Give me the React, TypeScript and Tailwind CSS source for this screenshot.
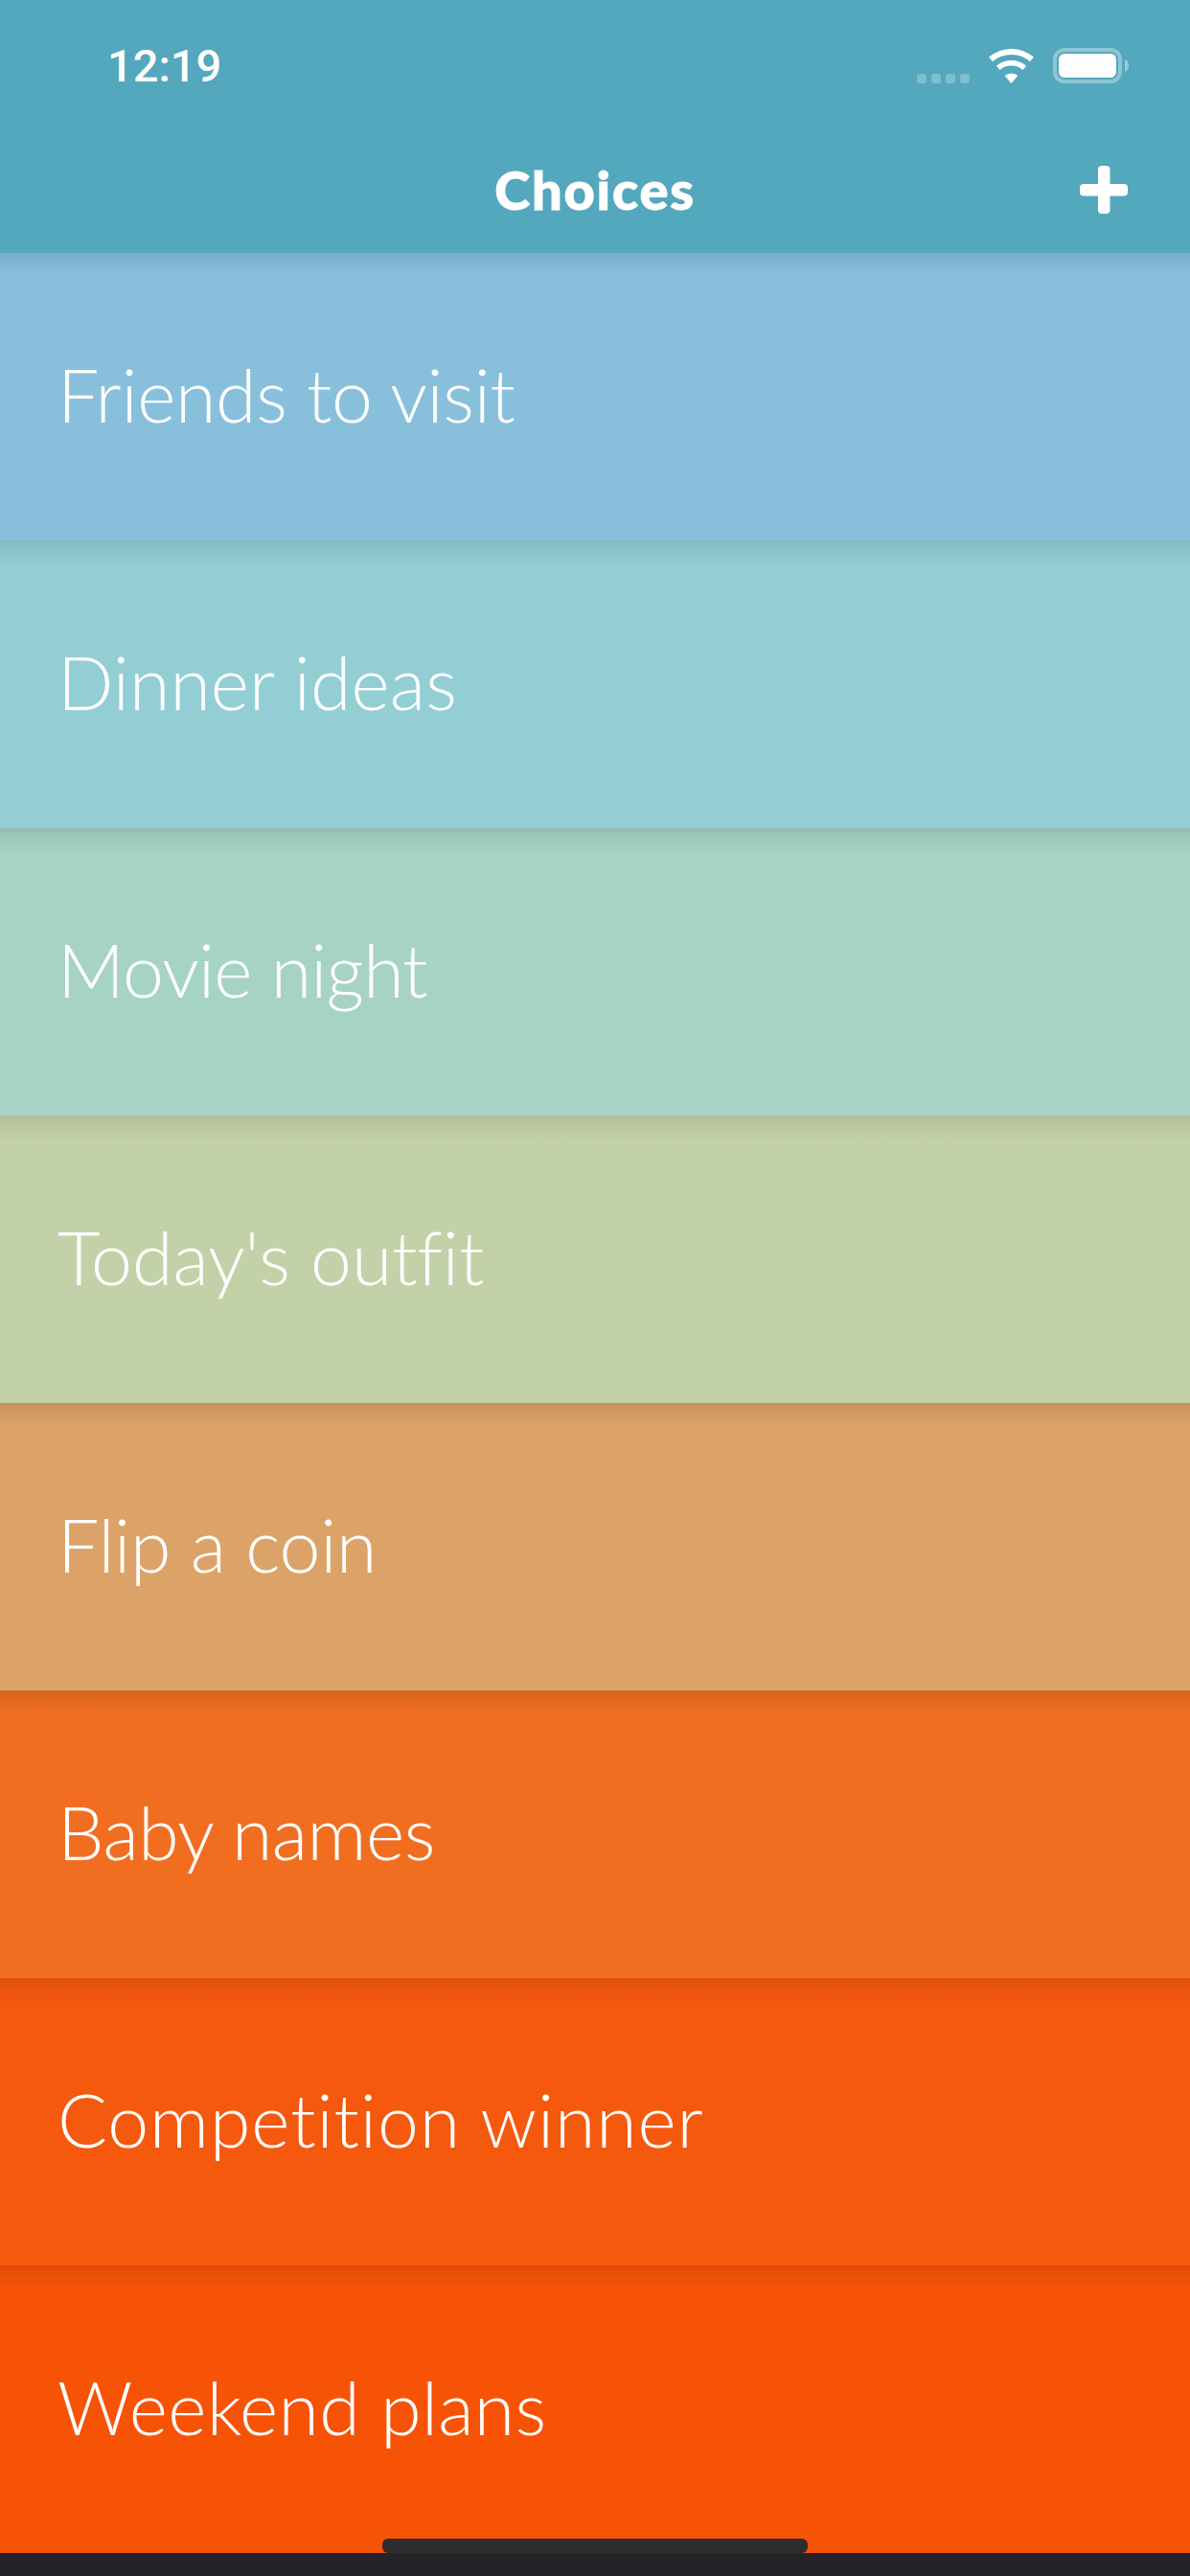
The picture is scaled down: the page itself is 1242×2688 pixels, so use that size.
export default function App() {
  const rows = [
    { label: "Friends to visit", bg: "bg-[#88c0dc]", track: "tracking-[-0.35px]" },
    { label: "Dinner ideas", bg: "bg-[#93ced5]", track: "tracking-[0.1px]" },
    { label: "Movie night", bg: "bg-[#a6d3c5]", track: "tracking-[-0.8px]" },
    { label: "Today's outfit", bg: "bg-[#c3d1a8]", track: "tracking-normal" },
    { label: "Flip a coin", bg: "bg-[#dca368]", track: "tracking-[-0.3px]" },
    { label: "Baby names", bg: "bg-[#f16e21]", track: "tracking-[-0.5px]" },
    { label: "Competition winner", bg: "bg-[#f4590e]", track: "tracking-[0.9px]" },
    { label: "Weekend plans", bg: "bg-[#f75307]", track: "tracking-[0.3px]" },
  ];
  return (
    <div className="w-[1242px] h-[2688px] flex flex-col overflow-hidden bg-[#26222a] font-['Lato',sans-serif] text-white">
      <header className="h-[264px] shrink-0 bg-[#54a8bd] flex flex-col">
        <div className="h-[136px] flex items-center justify-between pl-[112px] pr-[71px]">
          <span className="font-['Roboto',sans-serif] font-medium text-[47px] leading-none">12:19</span>
          <div className="flex items-end">
            <div className="flex gap-[5px] mr-[20px]">
              <span className="w-[10px] h-[10px] rounded-[3px] bg-white/25" />
              <span className="w-[10px] h-[10px] rounded-[3px] bg-white/25" />
              <span className="w-[10px] h-[10px] rounded-[3px] bg-white/25" />
              <span className="w-[10px] h-[10px] rounded-[3px] bg-white/25" />
            </div>
            <svg width="47" height="36" viewBox="0 0 47 36" className="mr-[20px]" fill="#fff">
              <path d="M0.1 8.6A36 36 0 0 1 46.9 8.6L43 13.2A30 30 0 0 0 4 13.2Z" />
              <path d="M7.9 17.8A24 24 0 0 1 39.1 17.8L35.5 22A18.5 18.5 0 0 0 11.5 22Z" />
              <path d="M16.7 28A10.5 10.5 0 0 1 30.3 28L23.5 36Z" />
            </svg>
            <div className="w-[72px] h-[37px] rounded-[12px] border-[4px] border-white/35 p-[2px] flex">
              <div className="flex-1 rounded-[6px] bg-white" />
            </div>
            <svg width="7" height="13" viewBox="0 0 7 13" className="mb-[12px] ml-[3px] -mr-[10px]" fill="#fff" fillOpacity="0.4">
              <path d="M0 0C3 1 4 4 4 6.5C4 9 3 12 0 13Z" />
            </svg>
          </div>
        </div>
        <div className="h-[124px] grid grid-cols-[1fr_auto_1fr] items-center px-[65px]">
          <span />
          <h1 className="font-black text-[56px] leading-none tracking-[1.8px] [-webkit-text-stroke:1px_white]">Choices</h1>
          <svg width="50" height="50" viewBox="0 0 50 50" className="justify-self-end" fill="#fff">
            <rect x="19" y="0" width="12.5" height="50" rx="4" />
            <rect x="0" y="19" width="50" height="12.5" rx="4" />
          </svg>
        </div>
      </header>
      {rows.map((r) => (
        <div
          key={r.label}
          className={`h-[300px] shrink-0 flex items-center pl-[60px] pb-[6px] bg-[linear-gradient(to_bottom,rgba(0,0,0,0.1),rgba(0,0,0,0.06)_8px,rgba(0,0,0,0)_26px)] ${r.bg}`}
        >
          <span className={`font-light text-[77px] leading-none [font-variant-ligatures:none] ${r.track}`}>{r.label}</span>
        </div>
      ))}
      <div className="flex-1 flex justify-center items-start -mt-[15px]">
        <div className="w-[444px] h-[15px] rounded-[6px] bg-[#2e2e2e]" />
      </div>
    </div>
  );
}
